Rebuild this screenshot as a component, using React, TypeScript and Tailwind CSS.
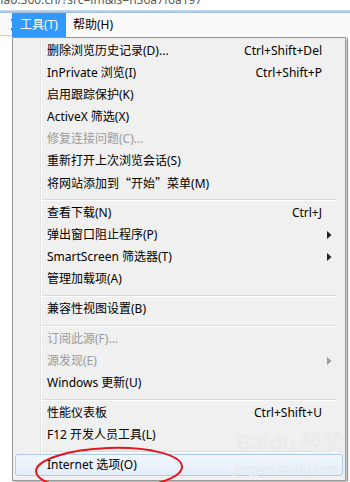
import { ReactNode } from 'react';

type Item =
  | { kind: 'sep' }
  | { kind: 'item'; label: ReactNode; shortcut?: string; arrow?: boolean; disabled?: boolean; active?: boolean };

const cjk = "font-['Noto_Sans_CJK_SC',sans-serif]";

const items: Item[] = [
  { kind: 'item', label: '删除浏览历史记录(D)...', shortcut: 'Ctrl+Shift+Del' },
  { kind: 'item', label: 'InPrivate 浏览(I)', shortcut: 'Ctrl+Shift+P' },
  { kind: 'item', label: '启用跟踪保护(K)' },
  { kind: 'item', label: 'ActiveX 筛选(X)' },
  { kind: 'item', label: '修复连接问题(C)...', disabled: true },
  { kind: 'item', label: '重新打开上次浏览会话(S)' },
  {
    kind: 'item',
    label: (
      <>
        将网站添加到<span className={cjk}>“</span>开始<span className={cjk}>”</span>菜单(M)
      </>
    ),
  },
  { kind: 'sep' },
  { kind: 'item', label: '查看下载(N)', shortcut: 'Ctrl+J' },
  { kind: 'item', label: '弹出窗口阻止程序(P)', arrow: true },
  { kind: 'item', label: 'SmartScreen 筛选器(T)', arrow: true },
  { kind: 'item', label: '管理加载项(A)' },
  { kind: 'sep' },
  { kind: 'item', label: '兼容性视图设置(B)' },
  { kind: 'sep' },
  { kind: 'item', label: '订阅此源(F)...', disabled: true },
  { kind: 'item', label: '源发现(E)', disabled: true, arrow: true },
  { kind: 'item', label: 'Windows 更新(U)' },
  { kind: 'sep' },
  { kind: 'item', label: '性能仪表板', shortcut: 'Ctrl+Shift+U' },
  { kind: 'item', label: 'F12 开发人员工具(L)' },
  { kind: 'sep' },
  { kind: 'item', label: 'Internet 选项(O)', active: true },
];

function Arrow({ disabled }: { disabled?: boolean }) {
  return (
    <svg width="5" height="8" viewBox="0 0 5 8" className="shrink-0">
      <path d="M0 0 L4.5 4 L0 8 Z" fill={disabled ? '#9a9a9a' : '#222'} />
    </svg>
  );
}

function Row({ item }: { item: Item }): ReactNode {
  if (item.kind === 'sep') {
    return (
      <div className="h-[8px] pl-[27px] pr-[6px] pt-[5px]">
        <div className="h-px bg-[#dcdcdc]" />
        <div className="h-px bg-white" />
      </div>
    );
  }
  return (
    <div
      className={`h-[22px] flex items-center pl-[31px] pr-[10px] rounded-[3px] border ${
        item.active ? 'border-[#aeccee] bg-gradient-to-b from-[#f2f7fd] to-[#e4eefa]' : 'border-transparent'
      } ${item.disabled ? 'text-[#9b9b9b]' : 'text-black'}`}
    >
      <span className="flex-1 whitespace-nowrap">{item.label}</span>
      {item.shortcut && <span className="mr-[10px] whitespace-nowrap">{item.shortcut}</span>}
      {item.arrow && <Arrow disabled={item.disabled} />}
    </div>
  );
}

export default function App() {
  return (
    <div className="relative w-[350px] h-[482px] overflow-hidden bg-white text-[12px] leading-none font-['Noto_Sans','Noto_Sans_CJK_SC',sans-serif]">
      {/* address bar strip */}
      <div className="h-[10px] overflow-hidden bg-white">
        <div className="-mt-[6px] -ml-[4px] text-[#5a5a5a] whitespace-nowrap">hao.360.cn/?src=lm&amp;ls=n36a7f6a197</div>
      </div>
      <div className="h-[3px] bg-gradient-to-b from-[#c9dbef] to-[#9fbde0]" />

      {/* menu bar */}
      <div className="h-[24px] flex items-stretch bg-[#fafafa]">
        <div className="w-[12px] flex flex-col">
          <div className="flex-1 flex items-center justify-end text-black">
            <span className="-mr-[2px]">)</span>
          </div>
          <div className="h-[2px] border-t border-[#cfcfcf]" />
        </div>
        <div className="w-[54px] flex items-center justify-center bg-[#3399ff] text-white">工具(T)</div>
        <div className="flex items-center pl-[7px] text-black">帮助(H)</div>
      </div>

      {/* dropdown area */}
      <div className="flex">
        <div className="w-[12px]" />
        <div className="relative w-[334px] h-[444px] bg-[#f0f0f0] border border-[#979797] p-[2px] shadow-[2px_2px_2px_rgba(0,0,0,0.25)]">
          <div className="absolute left-[27px] top-0 bottom-0 w-px bg-[#e2e3e3]" />
          <div className="absolute left-[28px] top-0 bottom-0 w-px bg-white" />
          <div className="relative">
            {items.map((it, i) => (
              <Row key={i} item={it} />
            ))}
          </div>
        </div>
        <div className="ml-[1px] w-px h-[444px] bg-[#bcbcbc]" />
      </div>

      {/* watermark */}
      <div className="absolute left-[236px] top-[430px] text-[22px] font-bold text-[#ebebeb] tracking-tight pointer-events-none">
        Baidu 经验
      </div>
      <div className="absolute left-[234px] top-[463px] text-[12px] text-[#e8e8e8] pointer-events-none">jingyan.baidu.com</div>

      {/* red ellipse */}
      <svg className="absolute left-[30px] top-[444px] pointer-events-none" width="160" height="48" viewBox="0 0 160 48">
        <ellipse cx="79" cy="25" rx="73" ry="21" fill="none" stroke="#e8141b" strokeWidth="2" transform="rotate(-2 79 25)" />
      </svg>
    </div>
  );
}
